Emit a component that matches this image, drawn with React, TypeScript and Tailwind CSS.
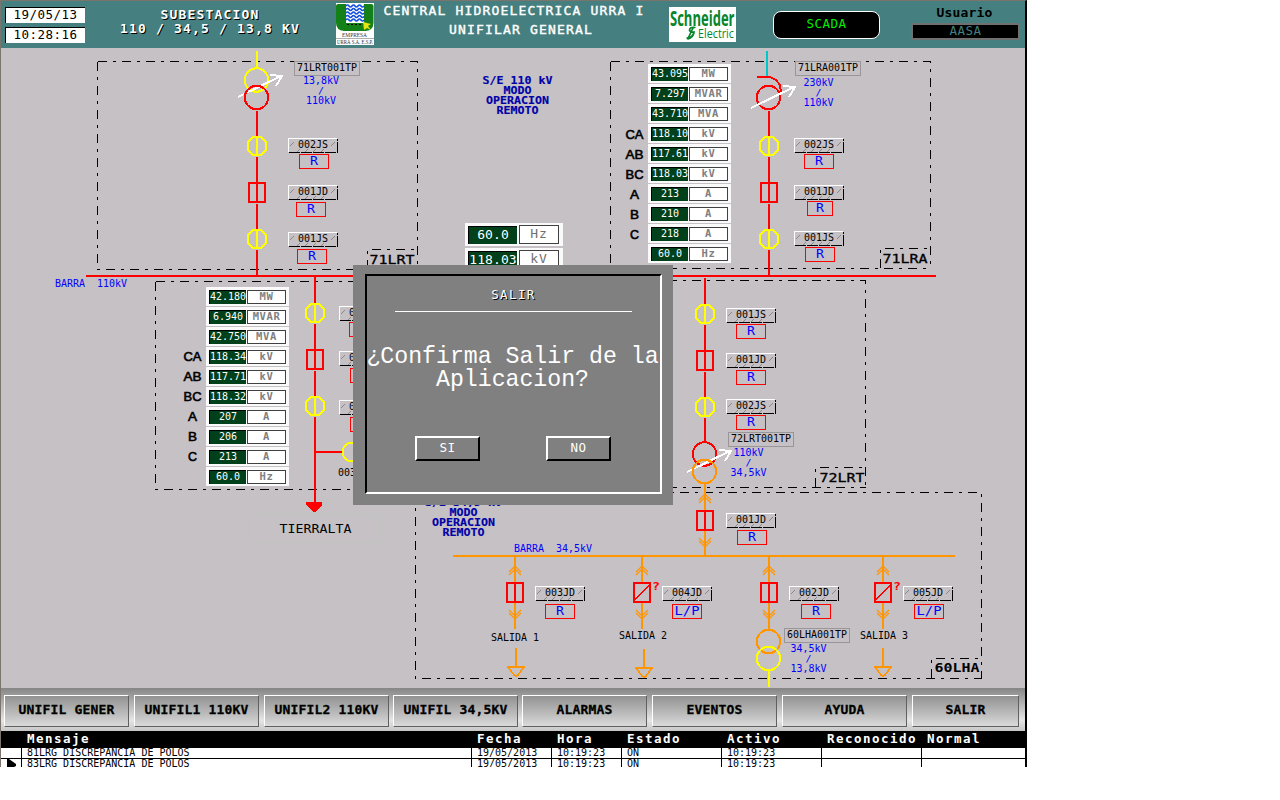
import React from "react";

const MONO = "font-['DejaVu_Sans_Mono',monospace]";

type TxtProps = {
  x: number;
  y: number;
  s: string;
  adv?: number;
  size?: number;
  fill?: string;
  bold?: boolean;
  heavy?: number;
  sans?: boolean;
};

/* Fixed-pitch diagram label: y is the baseline, adv the width of one cell. */
function Txt({ x, y, s, adv = 6, size = 10, fill = "#000", bold, heavy, sans }: TxtProps) {
  return (
    <text
      x={x}
      y={y}
      fontSize={size}
      fill={fill}
      stroke={heavy ? fill : undefined}
      strokeWidth={heavy}
      fontWeight={bold ? 700 : 400}
      textLength={s.length * adv}
      lengthAdjust="spacingAndGlyphs"
      className={sans ? "font-['Liberation_Sans',sans-serif] whitespace-pre" : "font-['DejaVu_Sans_Mono',monospace] whitespace-pre"}
    >
      {s}
    </text>
  );
}

function V({ x, a, b, c = "#f00" }: { x: number; a: number; b: number; c?: string }) {
  return <line x1={x} x2={x} y1={a} y2={b} stroke={c} strokeWidth={2} shapeRendering="crispEdges" />;
}

function Isolator({ x, y }: { x: number; y: number }) {
  return (
    <g stroke="#ff0" strokeWidth={2} fill="none" shapeRendering="crispEdges">
      <path d={`M${x - 4} ${y - 9}h8l5 5v8l-5 5h-8l-5 -5v-8z`} />
      <line x1={x} x2={x} y1={y - 9} y2={y + 9} />
    </g>
  );
}

function Breaker({ x, y, open }: { x: number; y: number; open?: boolean }) {
  return (
    <g stroke="#f00" strokeWidth={2} fill="none" shapeRendering="crispEdges">
      <rect x={x - 8} y={y - 9} width={16} height={19} />
      {open ? (
        <line x1={x - 7} x2={x + 7} y1={y + 8} y2={y - 7} strokeWidth={1.4} />
      ) : (
        <line x1={x} x2={x} y1={y - 9} y2={y + 10} />
      )}
    </g>
  );
}

function Ring({ x, y, c }: { x: number; y: number; c: string }) {
  return <circle cx={x} cy={y} r={11.7} stroke={c} strokeWidth={2} fill="none" shapeRendering="crispEdges" />;
}

function Arrow({ x, y }: { x: number; y: number }) {
  return (
    <path
      d={`M${x} ${y}L${x + 43} ${y - 21}M${x + 32} ${y - 22}L${x + 44} ${y - 21}L${x + 38} ${y - 11}`}
      stroke="#fff"
      strokeWidth={2}
      fill="none"
      shapeRendering="crispEdges"
    />
  );
}

function Chevrons({ x, y, down }: { x: number; y: number; down?: boolean }) {
  const k = down ? -1 : 1;
  return (
    <path
      d={`M${x - 6} ${y + 6 * k}L${x} ${y}L${x + 6} ${y + 6 * k}M${x - 6} ${y + 9 * k}L${x} ${y + 3 * k}L${x + 6} ${y + 9 * k}`}
      stroke="#ff9500"
      strokeWidth={1.2}
      fill="none"
    />
  );
}

function Tag({ x, y, s }: { x: number; y: number; s: string }) {
  return (
    <g>
      <g shapeRendering="crispEdges" fill="none">
        <path d={`M${x + 0.5} ${y + 14}V${y + 0.5}H${x + 49}`} stroke="#fff" />
        <path d={`M${x + 1} ${y + 14.5}H${x + 49.5}V${y + 1}`} stroke="#000" strokeDasharray="11 1" />
        <path
          d={`M${x + 2} ${y + 8}l4 -4M${x + 43} ${y + 8}l4 -4M${x + 9} ${y + 14}l3 -3M${x + 17} ${y + 14}l3 -3M${x + 25} ${y + 14}l3 -3M${x + 33} ${y + 14}l3 -3`}
          stroke="#888"
        />
      </g>
      <Txt x={x + 10} y={y + 10} s={s} size={9.8} />
    </g>
  );
}

function Mode({ x, y, s = "R", w = 29 }: { x: number; y: number; s?: string; w?: number }) {
  const adv = s.length > 1 ? 8.3 : 8;
  return (
    <g>
      <rect x={x + 0.5} y={y + 0.5} width={w} height={14} fill="none" stroke="#f00" shapeRendering="crispEdges" />
      <Txt x={x + w / 2 + 0.5 - (s.length * adv) / 2} y={y + 11} s={s} adv={adv} size={12.4} fill="#00f" />
    </g>
  );
}

function PlateTag({ x, y, s }: { x: number; y: number; s: string }) {
  return (
    <g>
      <rect x={x + 0.5} y={y + 0.5} width={65} height={14} fill="#c6c1c5" stroke="#99969a" shapeRendering="crispEdges" />
      <Txt x={x + 3} y={y + 10} s={s} />
    </g>
  );
}

function Ratio({ x, y, a, b }: { x: number; y: number; a: string; b: string }) {
  return (
    <g>
      <Txt x={x - a.length * 3} y={y} s={a} fill="#00f" />
      <Txt x={x - 3} y={y + 10} s="/" fill="#00f" size={8.5} />
      <Txt x={x - b.length * 3} y={y + 20} s={b} fill="#00f" />
    </g>
  );
}

function ModeText({ x, y, kv }: { x: number; y: number; kv: string }) {
  return (
    <g>
      {[kv, "MODO", "OPERACION", "REMOTO"].map((s, i) => (
        <Txt key={s} x={x - s.length * 3.5} y={y + i * 10} s={s} adv={7} size={9.8} bold heavy={0.15} fill="#0000a8" />
      ))}
    </g>
  );
}

function Ground({ x, y }: { x: number; y: number }) {
  return (
    <g stroke="#ff9500" strokeWidth={2} fill="none" shapeRendering="crispEdges">
      <line x1={x} x2={x} y1={y} y2={y + 19} />
      <path d={`M${x - 8} ${y + 19}h16l-6 8l-2 1.500l-2 -1.500z`} strokeWidth={1.6} />
    </g>
  );
}

function OutFeeder({ x, open }: { x: number; open?: boolean }) {
  return (
    <g>
      <V x={x} a={557} b={583} c="#ff9500" />
      <V x={x} a={603} b={629} c="#ff9500" />
      <Chevrons x={x} y={566} />
      <Chevrons x={x} y={619} down />
      <Breaker x={x} y={592} open={open} />
      {open && <Txt x={x + 10} y={590} s="?" adv={8} size={10} bold fill="#f00" />}
    </g>
  );
}

function Diagram() {
  return (
    <svg className="absolute inset-0" width={1025} height={640} viewBox="0 48 1025 640">
      <g fill="none" stroke="#000" strokeDasharray="9 6 3 6" shapeRendering="crispEdges">
        <path d="M97.500 61.500H417.500V269.500M97.500 61.500V269.500H417.500M367.500 269V249.500H417.500" />
        <path d="M610.500 61.500H930.500V268.500M610.500 61.500V268.500H930.500M880.500 268V248.500H930.500" />
        <path d="M155.500 281.500H500M155.500 281.500V489.500H500" />
        <path d="M500 280.500H865.500V487.500M500 487.500H865.500M815.500 487V467.500H865.500" />
        <path d="M415.500 492.500H981.500V678.500M415.500 492.500V678.500H981.500M931.500 678V658.500H981.500" />
      </g>

      <g shapeRendering="crispEdges">
        <rect x={86} y={275} width={850} height={2} fill="#f00" />
        <rect x={453} y={555} width={502} height={2} fill="#ff9500" />
      </g>

      {/* 71LRT bay */}
      <V x={257} a={51} b={67} c="#ff0" />
      <Ring x={256.5} y={80} c="#ff0" />
      <Arrow x={238} y={97} />
      <Ring x={256.5} y={97.5} c="#f00" />
      <V x={257} a={111} b={136} />
      <V x={257} a={157} b={182} />
      <V x={257} a={204} b={229} />
      <V x={257} a={250} b={275} />
      <Isolator x={257} y={146} />
      <Breaker x={257} y={192} />
      <Isolator x={257} y={239} />
      <PlateTag x={294} y={61} s="71LRT001TP" />
      <Ratio x={321} y={84} a="13,8kV" b="110kV" />
      <Tag x={288} y={138} s="002JS" />
      <Mode x={299} y={154} />
      <Tag x={288} y={185} s="001JD" />
      <Mode x={296} y={202} />
      <Tag x={288} y={232} s="001JS" />
      <Mode x={297} y={249} />
      <Txt x={369.500} y={264} s="71LRT" adv={9} size={12.600} heavy={0.3} />

      {/* 71LRA bay */}
      <V x={767} a={51} b={76} c="#00c8c8" />
      <path d="M757 77h13l6 3l4 5l1 8l-4 -2" stroke="#f00" strokeWidth={2} fill="none" shapeRendering="crispEdges" />
      <Ring x={768.5} y={97.5} c="#f00" />
      <Arrow x={751} y={108} />
      <V x={769} a={111} b={136} />
      <V x={769} a={157} b={182} />
      <V x={769} a={204} b={229} />
      <V x={769} a={250} b={275} />
      <Isolator x={769} y={146} />
      <Breaker x={769} y={192} />
      <Isolator x={769} y={239} />
      <PlateTag x={795} y={61} s="71LRA001TP" />
      <Ratio x={818.500} y={86} a="230kV" b="110kV" />
      <Tag x={794} y={138} s="002JS" />
      <Mode x={804} y={154} />
      <Tag x={794} y={185} s="001JD" />
      <Mode x={807} y={201} w={25} />
      <Tag x={794} y={231} s="001JS" />
      <Mode x={805} y={247} />
      <Txt x={882.500} y={263} s="71LRA" adv={9} size={12.600} heavy={0.3} />

      <ModeText x={517.500} y={84} kv="S/E 110 kV" />
      <Txt x={55} y={287} s="BARRA  110kV" fill="#00f" />

      {/* Tierralta feeder */}
      <V x={315} a={277} b={303} />
      <V x={315} a={324} b={349} />
      <V x={315} a={371} b={396} />
      <V x={315} a={417} b={503} />
      <rect x={315} y={451} width={28} height={2} fill="#f00" />
      <path d="M306 502h16v3l-7 7h-2l-7 -7z" fill="#f00" shapeRendering="crispEdges" />
      <Isolator x={315} y={313} />
      <Breaker x={315} y={359} />
      <Isolator x={315} y={406} />
      <circle cx={352} cy={452} r={9.500} fill="none" stroke="#ff0" strokeWidth={2} shapeRendering="crispEdges" />
      <Tag x={339} y={306} s="001JS" />
      <Mode x={349} y={322} />
      <Tag x={339} y={351} s="001JD" />
      <Mode x={350} y={368} />
      <Tag x={339} y={400} s="002JS" />
      <Mode x={350} y={417} />
      <Txt x={338} y={476} s="003JS" />
      <rect x={248.500} y={514.500} width={134} height={29} fill="none" stroke="#c2c3c0" strokeWidth={2} />
      <Txt x={279.500} y={533} s="TIERRALTA" adv={8} size={12.400} />

      {/* 72LRT bay */}
      <V x={705} a={278} b={304} />
      <V x={705} a={325} b={350} />
      <V x={705} a={372} b={397} />
      <V x={705} a={418} b={443} />
      <Isolator x={705} y={314} />
      <Breaker x={705} y={360} />
      <Isolator x={705} y={407} />
      <Ring x={704.5} y={454} c="#f00" />
      <Arrow x={687} y={472} />
      <Ring x={704.5} y={471.5} c="#ff9500" />
      <V x={705} a={483} b={511} c="#ff9500" />
      <V x={705} a={531} b={556} c="#ff9500" />
      <Chevrons x={705} y={494} />
      <Chevrons x={705} y={547} down />
      <Breaker x={705} y={520} />
      <Tag x={726} y={308} s="001JS" />
      <Mode x={736} y={324} />
      <Tag x={726} y={353} s="001JD" />
      <Mode x={736} y={370} />
      <Tag x={726} y={399} s="002JS" />
      <Mode x={736} y={415} />
      <PlateTag x={728} y={432} s="72LRT001TP" />
      <Ratio x={748.500} y={456} a="110kV" b="34,5kV" />
      <Txt x={819.500} y={482} s="72LRT" adv={9} size={12.600} heavy={0.3} />
      <Tag x={726} y={513} s="001JD" />
      <Mode x={737} y={530} />

      {/* 34,5 kV bus and outgoing feeders */}
      <ModeText x={463.500} y={506} kv="S/E 34,5 kV" />
      <Txt x={514} y={552} s="BARRA  34,5kV" fill="#00f" />
      <OutFeeder x={515} />
      <OutFeeder x={642} open />
      <OutFeeder x={769} />
      <OutFeeder x={883} open />
      <Tag x={535} y={586} s="003JD" />
      <Mode x={545} y={604} />
      <Tag x={662} y={586} s="004JD" />
      <Mode x={672} y={604} s="L/P" />
      <Tag x={789} y={586} s="002JD" />
      <Mode x={801} y={604} />
      <Tag x={903} y={586} s="005JD" />
      <Mode x={914} y={604} s="L/P" />
      <Txt x={491} y={641} s="SALIDA 1" />
      <Txt x={619} y={639} s="SALIDA 2" />
      <Txt x={860} y={639} s="SALIDA 3" />
      <Ground x={516} y={648} />
      <Ground x={644} y={649} />
      <Ground x={883} y={648} />
      <Ring x={768.5} y={641.5} c="#ff9500" />
      <Ring x={768.5} y={658.5} c="#ff0" />
      <V x={769} a={670} b={687} c="#ff0" />
      <PlateTag x={784} y={628} s="60LHA001TP" />
      <Ratio x={808.500} y={652} a="34,5kV" b="13,8kV" />
      <Txt x={934.500} y={672} s="60LHA" adv={9} size={12.600} bold />

      {/* Phase captions */}
      {["CA", "AB", "BC", "A", "B", "C"].map((s, i) => (
        <g key={s}>
          <Txt x={634.500 - s.length * 4.5} y={138.500 + i * 20} s={s} adv={9} size={13} heavy={0.6} sans />
          <Txt x={192.500 - s.length * 4.5} y={361 + i * 20} s={s} adv={9} size={13} heavy={0.6} sans />
        </g>
      ))}
    </svg>
  );
}

const UNITS = ["MW", "MVAR", "MVA", "kV", "kV", "kV", "A", "A", "A", "Hz"];

function Meters({ values }: { values: string[] }) {
  return (
    <div className="flex w-[83px] flex-col gap-px">
      {values.map((v, i) => (
        <div key={i} className="flex h-[19px] items-center gap-px bg-[#fafafa] pl-[3px]">
          <div className={`${MONO} flex h-[14px] w-[37px] items-center justify-center border-l border-t border-black bg-[#00401a] text-[10px] leading-none text-white`}>
            {v}
          </div>
          <div className={`${MONO} flex h-[14px] w-[39px] items-center justify-center border border-[#404040] bg-white text-[10.5px] font-bold leading-none tracking-[0.6px] text-[#808080]`}>
            {UNITS[i]}
          </div>
        </div>
      ))}
    </div>
  );
}

function BusMeters() {
  return (
    <div className="flex w-[98px] flex-col gap-[2px]">
      {[
        ["60.0", "Hz"],
        ["118.03", "kV"],
      ].map(([v, u]) => (
        <div key={u} className="flex h-[23px] items-center gap-[2px] bg-[#fafafa] pl-[3px]">
          <div className={`${MONO} flex h-[18px] w-[49px] items-center justify-center border-l border-t border-black bg-[#00401a] pb-[2px] text-[13px] leading-none tracking-[0.1px] text-white`}>
            {v}
          </div>
          <div className={`${MONO} flex h-[19px] w-[40px] items-center justify-center border border-[#404040] bg-white pb-[2px] text-[13px] leading-none tracking-[1px] text-[#707070]`}>
            {u}
          </div>
        </div>
      ))}
    </div>
  );
}

function DialogButton({ label }: { label: string }) {
  return (
    <button className={`${MONO} h-[25px] w-[65px] border-2 border-b-black border-l-white border-r-black border-t-white bg-[#808080] pb-px text-[12.5px] leading-none tracking-[0.4px] text-white`}>
      {label}
    </button>
  );
}

function ExitDialog() {
  return (
    <div className="absolute left-[353px] top-[265px] h-[240px] w-[320px] bg-[#808080] pl-[12px] pt-[9px]">
      <div className="flex h-[220px] w-[297px] flex-col items-center border-2 border-b-white border-l-black border-r-white border-t-black">
        <h2 className={`${MONO} mt-[12px] h-[14px] text-[12.5px] leading-[14px] tracking-[1.4px] text-white [text-shadow:1px_1px_0_#000]`}>SALIR</h2>
        <div className="mt-[9px] h-px w-[237px] bg-white" />
        <p className="mt-[34px] whitespace-nowrap pr-[2px] text-center font-['Liberation_Mono',monospace] text-[23.2px] leading-[23px] text-white">
          ¿Confirma Salir de la
          <br />
          Aplicacion?
        </p>
        <div className="mt-[44px] flex gap-[66px] pr-[1px]">
          <DialogButton label="SI" />
          <DialogButton label="NO" />
        </div>
      </div>
    </div>
  );
}

function UrraLogo() {
  return (
    <svg width={38} height={42} viewBox="0 0 38 42">
      <rect width={38} height={42} fill="#fff" />
      <path d="M0 3Q0 1 2 1H10V20H28V1H35Q37.500 1 37.500 3V20Q37 28 29 28H8Q0 27 0 20Z" fill="#138018" />
      <rect x={10} y={1} width={18} height={19} fill="#fff" />
      <g fill="none" stroke="#1450e0" strokeWidth={1.7}>
        {[3, 6.5, 10, 13.5, 17].map((y) => (
          <path key={y} d={`M10 ${y}q1.500 -2 3 0t3 0t3 0t3 0t3 0t3 0`} />
        ))}
      </g>
      <path d="M11 21.500H28" stroke="#000" strokeDasharray="2 2" />
      <path d="M27 19l8 2l-3 2l3 4l-4 -2l-3 2z" fill="#e5e514" />
      <g fill="#333" fontSize={5.2} className="font-['Liberation_Serif',serif]">
        <text x={6} y={33.500} textLength={25} lengthAdjust="spacingAndGlyphs">EMPRESA</text>
        <text x={1} y={40.800} textLength={36} lengthAdjust="spacingAndGlyphs">URRÁ S.A. E.S.P.</text>
      </g>
      <path d="M0 35.500H38" stroke="#777" strokeWidth={0.6} />
    </svg>
  );
}

function SchneiderLogo() {
  return (
    <svg width={67} height={35} viewBox="0 0 67 35">
      <rect width={67} height={35} fill="#fff" />
      <g fill="#07852c" className="font-['Open_Sans',sans-serif]">
        <text x={1} y={18.500} fontSize={21} fontWeight={700} textLength={64.5} lengthAdjust="spacingAndGlyphs">Schneider</text>
        <text x={29} y={31} fontSize={13.5} fontWeight={500} textLength={36} lengthAdjust="spacingAndGlyphs">Electric</text>
      </g>
      <path
        d="M26.500 20.500q-6 -1 -6 3q1 2 4.500 1.500q-1 6 -7.500 6M24 21l-5.500 11.500M25 25.500q-1 5 -6 6.500"
        fill="none"
        stroke="#07852c"
        strokeWidth={1.7}
      />
    </svg>
  );
}

function Header() {
  return (
    <header className={`${MONO} flex h-[47px] w-full items-start bg-[#457f7f] leading-none`}>
      <div className="ml-[4px] mt-[6px] flex w-[80px] flex-col gap-[4px] text-[12.5px] tracking-[0.48px] text-black">
        <div className="h-[16px] border-l border-t border-black bg-white text-center leading-[13px]">19/05/13</div>
        <div className="h-[16px] border-l border-t border-black bg-white text-center leading-[13px]">10:28:16</div>
      </div>
      <div className="ml-[25px] mt-[7px] w-[200px] whitespace-pre text-center text-[13px] font-bold leading-[14px] tracking-[1.17px] text-white [text-shadow:1px_1px_0_#000]">
        SUBESTACION{"\n"}110 / 34,5 / 13,8 KV
      </div>
      <div className="ml-[26px] mt-[2px]">
        <UrraLogo />
      </div>
      <div className="ml-[5px] w-[270px] whitespace-nowrap text-center text-[13px] font-medium leading-[19px] tracking-[1.17px] text-white [-webkit-text-stroke:0.4px_#fff]">
        CENTRAL HIDROELECTRICA URRA I
        <div className="pl-[14px]">UNIFILAR GENERAL</div>
      </div>
      <div className="ml-[20px] mt-[6px]">
        <SchneiderLogo />
      </div>
      <button className="ml-[37px] mt-[10px] h-[28px] w-[107px] rounded-[8px] border border-white bg-black pb-[2px] text-[12.5px] tracking-[0.48px] text-[#00f000]">
        SCADA
      </button>
      <div className="ml-[31px] mt-[6px] w-[109px] text-center">
        <div className="pr-[2px] text-[13px] font-bold leading-[12px] tracking-[0.2px] text-black">Usuario</div>
        <div className="mt-[4px] h-[17px] border-2 border-[#707070] bg-black text-[12.5px] leading-[12px] tracking-[0.48px] text-[#457f7f]">AASA</div>
      </div>
    </header>
  );
}

const NAV = [
  { label: "UNIFIL GENER", box: "w-[125px]" },
  { label: "UNIFIL1 110KV", box: "w-[125px] ml-[5px]" },
  { label: "UNIFIL2 110KV", box: "w-[125px] ml-[5px]" },
  { label: "UNIFIL 34,5KV", box: "w-[125px] ml-[4px]" },
  { label: "ALARMAS", box: "w-[125px] ml-[4px]" },
  { label: "EVENTOS", box: "w-[125px] ml-[5px]" },
  { label: "AYUDA", box: "w-[125px] ml-[5px]" },
  { label: "SALIR", box: "w-[107px] ml-[5px]" },
];

function NavBar() {
  return (
    <nav className="flex h-[43px] items-start bg-gradient-to-b from-[#868686] via-[#e6e6e6] via-75% to-[#c6c6c6] pl-[3px] pt-[7px]">
      {NAV.map(({ label, box }) => (
        <button
          key={label}
          className={`${MONO} ${box} h-[32px] shrink-0 whitespace-nowrap border border-b-[#606060] border-l-white border-r-[#606060] border-t-white bg-gradient-to-b from-[#929292] to-[#dadada] pb-[3px] text-[13px] font-bold leading-none tracking-[0.17px] text-black [-webkit-text-stroke:0.3px_#000]`}
        >
          {label}
        </button>
      ))}
    </nav>
  );
}

const GRID = "grid grid-cols-[20px_450px_80px_70px_100px_100px_100px_103px]";

function AlarmTable() {
  const heads = ["", "Mensaje", "Fecha", "Hora", "Estado", "Activo", "Reconocido", "Normal"];
  const rows = [
    ["", "81LRG DISCREPANCIA DE POLOS", "19/05/2013", "10:19:23", "ON", "10:19:23", "", ""],
    ["", "83LRG DISCREPANCIA DE POLOS", "19/05/2013", "10:19:23", "ON", "10:19:23", "", ""],
  ];
  return (
    <div className={`${MONO} bg-white`}>
      <div className={`${GRID} h-[17px] bg-black text-[12.5px] font-bold leading-[16px] tracking-[1.47px] text-white`}>
        {heads.map((h, i) => (
          <div key={i} className="whitespace-nowrap pl-[6px]">{h}</div>
        ))}
      </div>
      {rows.map((r, k) => (
        <div key={k} className={`${GRID} ${k ? "h-[8px]" : "h-[11px] border-b border-black"} overflow-hidden text-[10px] leading-[10px] text-black`}>
          {r.map((c, i) => (
            <div key={i} className={`${i ? "border-l border-black" : ""} whitespace-nowrap pl-[5px]`}>
              {k === 1 && i === 0 ? (
                <svg width={11} height={8} viewBox="0 0 11 8">
                  <path d="M1 0h2l7 5v2l-2 1H1z" />
                </svg>
              ) : (
                c
              )}
            </div>
          ))}
        </div>
      ))}
    </div>
  );
}

export default function App() {
  return (
    <div className="h-[800px] w-full overflow-hidden bg-white">
      <div className="relative h-[767px] w-[1027px] overflow-hidden border-l border-r-2 border-t border-l-[#7a756c] border-r-black border-t-[#7a756c] bg-[#c6c1c5]">
        <Header />
        <main className="relative h-[640px]">
          <div className="absolute -left-px top-0 h-[640px] w-[1025px]">
            <Diagram />
            <div className="absolute left-[648px] top-[16px]">
              <Meters values={["43.095", "7.297", "43.710", "118.10", "117.61", "118.03", "213", "210", "218", "60.0"]} />
            </div>
            <div className="absolute left-[206px] top-[239px]">
              <Meters values={["42.180", "6.940", "42.750", "118.34", "117.71", "118.32", "207", "206", "213", "60.0"]} />
            </div>
            <div className="absolute left-[465px] top-[175px]">
              <BusMeters />
            </div>
          </div>
        </main>
        <NavBar />
        <AlarmTable />
        <div className="absolute -left-px -top-px">
          <ExitDialog />
        </div>
      </div>
    </div>
  );
}
